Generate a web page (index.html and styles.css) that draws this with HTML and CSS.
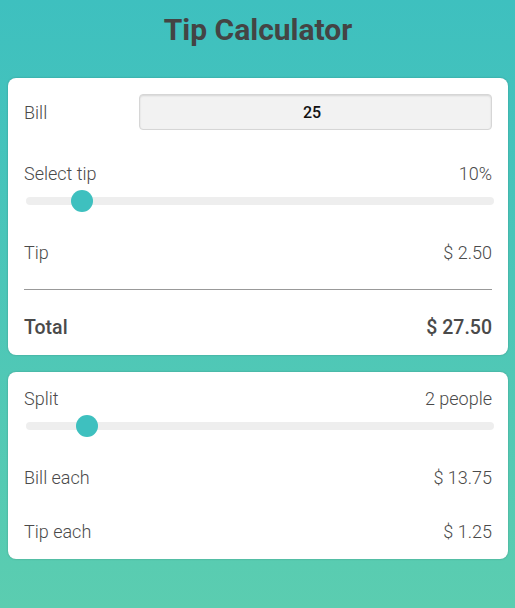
FILE: index.html
```html
<!DOCTYPE html>
<html>
<head>
<meta charset="utf-8">
<link rel="stylesheet" href="styles.css">
</head>
<body>
<div class="app">
  <h1 class="title">Tip Calculator</h1>
  <section class="card">
    <div class="row bill-row">
      <span class="label">Bill</span>
      <input class="bill-input" type="text" value="25">
    </div>
    <div class="row head-row">
      <span class="label">Select tip</span>
      <span class="value">10%</span>
    </div>
    <input class="slider" type="range" min="0" max="100" value="10">
    <div class="row tip-row">
      <span class="label">Tip</span>
      <span class="value">$ 2.50</span>
    </div>
    <hr class="divider">
    <div class="row total-row">
      <span class="label">Total</span>
      <span class="value">$ 27.50</span>
    </div>
  </section>
  <section class="card card-split">
    <div class="row split-head">
      <span class="label">Split</span>
      <span class="value">2 people</span>
    </div>
    <input class="slider" type="range" min="1" max="10" value="2">
    <div class="row each-row">
      <span class="label">Bill each</span>
      <span class="value">$ 13.75</span>
    </div>
    <div class="row each-row2">
      <span class="label">Tip each</span>
      <span class="value">$ 1.25</span>
    </div>
  </section>
</div>
</body>
</html>
```
FILE: styles.css
```css
html, body {
  margin: 0;
  height: 100%;
}
body {
  background: linear-gradient(180deg, #3ec0bf 0%, #5bcdb0 100%);
  font-family: Roboto, "Liberation Sans", sans-serif;
  color: #4a4a4a;
}
.app {
  padding: 0 7px 0 8px;
  display: flex;
  flex-direction: column;
}
.title {
  margin: 13px 0 31px;
  font-size: 30px;
  line-height: 34px;
  font-weight: 700;
  text-align: center;
  color: #444;
}
.card {
  background: #fff;
  border-radius: 8px;
  box-shadow: 0 0 2px rgba(0,0,0,0.25);
  padding: 16px 16px 17px;
  display: flex;
  flex-direction: column;
}
.card-split {
  margin-top: 17px;
  padding-top: 16px;
  padding-bottom: 18px;
}
.row {
  display: flex;
  justify-content: space-between;
  align-items: center;
  height: 20px;
  font-size: 18px;
  font-weight: 300;
}
.bill-row {
  height: 36px;
}
.bill-input {
  width: 353px;
  height: 36px;
  box-sizing: border-box;
  border: 1px solid #d6d6d6;
  border-radius: 4px;
  background: #f2f2f2;
  box-shadow: inset 0 1px 2px rgba(0,0,0,0.12);
  text-align: center;
  font-family: Roboto, "Liberation Sans", sans-serif;
  font-size: 16px;
  font-weight: 500;
  color: #111;
  padding: 0 7px 0 0;
  outline: none;
}
.head-row { margin-top: 33px; }
.tip-row { margin-top: 30px; }
.divider {
  margin: 27px 0 0;
  border: 0;
  height: 1px;
  background: #999;
}
.total-row {
  margin-top: 26px;
  height: 22px;
  font-size: 19.5px;
  font-weight: 500;
}
.each-row { margin-top: 30px; }
.each-row2 { margin-top: 34px; }
.slider {
  -webkit-appearance: none;
  appearance: none;
  margin: 7px 0 0 2px;
  width: 468px;
  height: 22px;
  background: transparent;
  outline: none;
}
.slider::-webkit-slider-runnable-track {
  height: 8px;
  background: #eeeeee;
  border-radius: 4px;
}
.slider::-webkit-slider-thumb {
  -webkit-appearance: none;
  width: 22px;
  height: 22px;
  border-radius: 50%;
  background: #3ec0bf;
  margin-top: -7px;
  border: 0;
}
```
